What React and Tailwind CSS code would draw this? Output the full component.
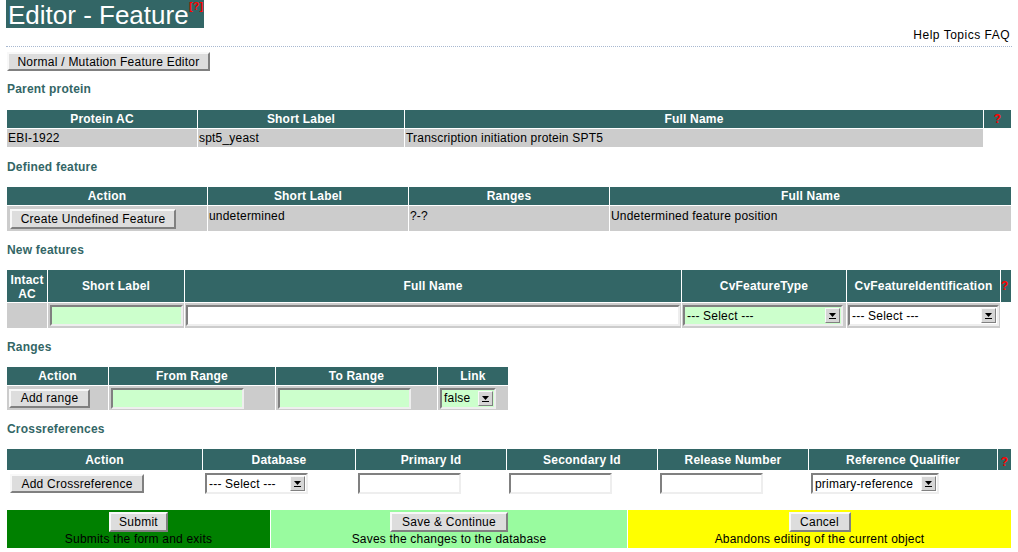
import React from 'react';

const TH = 'bg-[#336666] text-white font-bold text-[12px] leading-[14px] text-center p-0 align-middle';
const TD = 'bg-[#cccccc] text-[12px] leading-[14px] text-black p-0 text-left';

const Button = ({ children, className = '' }) => (
    <button
        className={
            'block bg-[#dddddd] border-2 border-t-[#f8f8f8] border-l-[#f8f8f8] border-b-[#808080] border-r-[#808080] text-[12px] leading-[14px] text-black text-center tracking-[0.25px] ' +
            className
        }
    >
        {children}
    </button>
);

const Input = ({ className = '' }) => (
    <div
        className={
            'h-[21px] border-2 border-t-[#808080] border-l-[#808080] border-b-[#eeeeee] border-r-[#eeeeee] ' +
            className
        }
    />
);

const Arrow = () => (
    <span className="flex items-center justify-center w-[15px] h-[15px] bg-[#d6d6d6] border border-t-[#f8f8f8] border-l-[#f8f8f8] border-b-[#808080] border-r-[#808080]">
        <svg width="9" height="7" viewBox="0 0 9 7">
            <path d="M1 1 L8 1 L4.5 5 Z" fill="#000" />
            <rect x="1" y="6" width="7" height="1" fill="#000" />
        </svg>
    </span>
);

const Select = ({ label, className = '' }) => (
    <div
        className={
            'h-[21px] flex items-center justify-between border-2 border-t-[#808080] border-l-[#808080] border-b-[#eeeeee] border-r-[#eeeeee] pl-[2px] pr-[1px] text-[12px] leading-[14px] text-black ' +
            className
        }
    >
        <span>{label}</span>
        <Arrow />
    </div>
);

const Label = ({ children, className = 'mt-[12px]' }) => (
    <div className={'ml-px h-[14px] leading-[14px] text-[12px] font-bold text-[#336666] ' + className}>{children}</div>
);

const Q = () => <span className="text-[#ff0000] font-bold">?</span>;

export default function App() {
    return (
        <div className="font-['Liberation_Sans',Arial,sans-serif] tracking-[0.2px] bg-white w-[1018px] h-[552px] overflow-hidden pl-[6px]">
            {/* title */}
            <div className="flex">
                <div className="relative bg-[#336666] w-[198px] h-[28px] text-white text-[26px] leading-[30px] pl-[2px] tracking-normal">
                    Editor - Feature
                    <span className="absolute left-[183px] top-0 text-[#ff0000] text-[11px] leading-[12px] font-bold">[?]</span>
                </div>
            </div>
            <div className="w-[1004px] h-[14px] leading-[14px] text-[12px] text-black text-right tracking-[0.5px]">Help Topics FAQ</div>
            <div className="w-[1006px] mt-[4px] border-t border-dotted border-[#a8b8d0]" />

            <Button className="ml-px mt-[5px] w-[203px] h-[19px]">Normal / Mutation Feature Editor</Button>

            <Label className="mt-[11px]">Parent protein</Label>
            <table className="mt-[13px] border-separate border-spacing-px table-fixed w-[1006px]">
                <thead>
                    <tr>
                        <th className={TH + ' w-[190px] h-[18px]'}>Protein AC</th>
                        <th className={TH + ' w-[206px]'}>Short Label</th>
                        <th className={TH + ' w-[578px]'}>Full Name</th>
                        <th className={TH + ' w-[27px]'}><Q /></th>
                    </tr>
                </thead>
                <tbody>
                    <tr>
                        <td className={TD + ' h-[18px] pl-px'}>EBI-1922</td>
                        <td className={TD + ' pl-px'}>spt5_yeast</td>
                        <td className={TD + ' pl-px'}>Transcription initiation protein SPT5</td>
                        <td className="p-0" />
                    </tr>
                </tbody>
            </table>

            <Label className="mt-[12px]">Defined feature</Label>
            <table className="mt-[12px] border-separate border-spacing-px table-fixed w-[1006px]">
                <thead>
                    <tr>
                        <th className={TH + ' w-[200px] h-[18px]'}>Action</th>
                        <th className={TH + ' w-[200px]'}>Short Label</th>
                        <th className={TH + ' w-[200px]'}>Ranges</th>
                        <th className={TH + ' w-[401px]'}>Full Name</th>
                    </tr>
                </thead>
                <tbody>
                    <tr>
                        <td className={TD + ' h-[25px] align-top pl-[3px] pt-[3px]'}>
                            <Button className="w-[166px] h-[20px]">Create Undefined Feature</Button>
                        </td>
                        <td className={TD + ' align-top pl-px pt-[3px]'}>undetermined</td>
                        <td className={TD + ' align-top pl-px pt-[3px]'}>?-?</td>
                        <td className={TD + ' align-top pl-px pt-[3px]'}>Undetermined feature position</td>
                    </tr>
                </tbody>
            </table>

            <Label className="mt-[11px]">New features</Label>
            <table className="mt-[12px] border-separate border-spacing-px table-fixed w-[1006px]">
                <thead>
                    <tr>
                        <th className={TH + ' w-[40px] h-[32px] leading-[13px] pt-px'}>
                            Intact
                            <br />
                            AC
                        </th>
                        <th className={TH + ' w-[136px]'}>Short Label</th>
                        <th className={TH + ' w-[496px]'}>Full Name</th>
                        <th className={TH + ' w-[164px]'}>CvFeatureType</th>
                        <th className={TH + ' w-[153px]'}>CvFeatureIdentification</th>
                        <th className={TH + ' w-[10px] text-left'}><Q /></th>
                    </tr>
                </thead>
                <tbody>
                    <tr>
                        <td className={TD + ' h-[25px]'} />
                        <td className={TD + ' pl-[2px]'}>
                            <Input className="w-[133px] bg-[#ccffcc]" />
                        </td>
                        <td className={TD + ' pl-px'}>
                            <Input className="w-[494px] bg-white" />
                        </td>
                        <td className={TD + ' pl-px'}>
                            <Select label="--- Select ---" className="w-[160px] bg-[#ccffcc]" />
                        </td>
                        <td className={TD + ' pl-px'}>
                            <Select label="--- Select ---" className="w-[151px] bg-white" />
                        </td>
                        <td className="p-0" />
                    </tr>
                </tbody>
            </table>

            <Label className="mt-[11px]">Ranges</Label>
            <table className="mt-[12px] border-separate border-spacing-px table-fixed w-[503px]">
                <thead>
                    <tr>
                        <th className={TH + ' w-[101px] h-[18px]'}>Action</th>
                        <th className={TH + ' w-[166px]'}>From Range</th>
                        <th className={TH + ' w-[161px]'}>To Range</th>
                        <th className={TH + ' w-[70px]'}>Link</th>
                    </tr>
                </thead>
                <tbody>
                    <tr>
                        <td className={TD + ' h-[24px] pl-[2px]'}>
                            <Button className="w-[81px] h-[19px]">Add range</Button>
                        </td>
                        <td className={TD + ' pl-[2px]'}>
                            <Input className="w-[133px] bg-[#ccffcc]" />
                        </td>
                        <td className={TD + ' pl-[2px]'}>
                            <Input className="w-[133px] bg-[#ccffcc]" />
                        </td>
                        <td className={TD + ' pl-[2px]'}>
                            <Select label="false" className="w-[56px] bg-[#ccffcc]" />
                        </td>
                    </tr>
                </tbody>
            </table>

            <Label className="mt-[11px]">Crossreferences</Label>
            <table className="mt-[12px] border-separate border-spacing-px table-fixed w-[1006px]">
                <thead>
                    <tr>
                        <th className={TH + ' w-[195px] h-[21px]'}>Action</th>
                        <th className={TH + ' w-[152px]'}>Database</th>
                        <th className={TH + ' w-[150px]'}>Primary Id</th>
                        <th className={TH + ' w-[150px]'}>Secondary Id</th>
                        <th className={TH + ' w-[150px]'}>Release Number</th>
                        <th className={TH + ' w-[188px]'}>Reference Qualifier</th>
                        <th className={TH + ' w-[13px] pt-[5px]'}><Q /></th>
                    </tr>
                </thead>
                <tbody>
                    <tr>
                        <td className="h-[24px] p-0 pl-[3px] pt-[3px] align-top">
                            <Button className="w-[134px] h-[19px]">Add Crossreference</Button>
                        </td>
                        <td className="p-0 pl-[2px] pt-[2px] align-top">
                            <Select label="--- Select ---" className="w-[103px] h-[20px] bg-white" />
                        </td>
                        <td className="p-0 pl-[2px] pt-[2px] align-top">
                            <Input className="w-[103px] h-[20px] bg-white" />
                        </td>
                        <td className="p-0 pl-[2px] pt-[2px] align-top">
                            <Input className="w-[103px] h-[20px] bg-white" />
                        </td>
                        <td className="p-0 pl-[2px] pt-[2px] align-top">
                            <Input className="w-[103px] h-[20px] bg-white" />
                        </td>
                        <td className="p-0 pl-[2px] pt-[2px] align-top">
                            <Select label="primary-reference" className="w-[128px] h-[20px] bg-white" />
                        </td>
                        <td className="p-0" />
                    </tr>
                </tbody>
            </table>

            {/* submit bar */}
            <div className="mt-[14px] ml-px w-[1004px] h-[38px] flex gap-px">
                <div className="w-[263px] bg-[#008000] flex flex-col items-center pt-[2px] text-[12px] leading-[13px] text-black">
                    <Button className="w-[59px] h-[20px]">Submit</Button>
                    <span className="mt-px">Submits the form and exits</span>
                </div>
                <div className="w-[356px] bg-[#99fb9f] flex flex-col items-center pt-[2px] text-[12px] leading-[13px] text-black">
                    <Button className="w-[118px] h-[20px]">Save &amp; Continue</Button>
                    <span className="mt-px">Saves the changes to the database</span>
                </div>
                <div className="flex-1 bg-[#ffff00] flex flex-col items-center pt-[2px] text-[12px] leading-[13px] text-black">
                    <Button className="w-[62px] h-[20px]">Cancel</Button>
                    <span className="mt-px">Abandons editing of the current object</span>
                </div>
            </div>
        </div>
    );
}
